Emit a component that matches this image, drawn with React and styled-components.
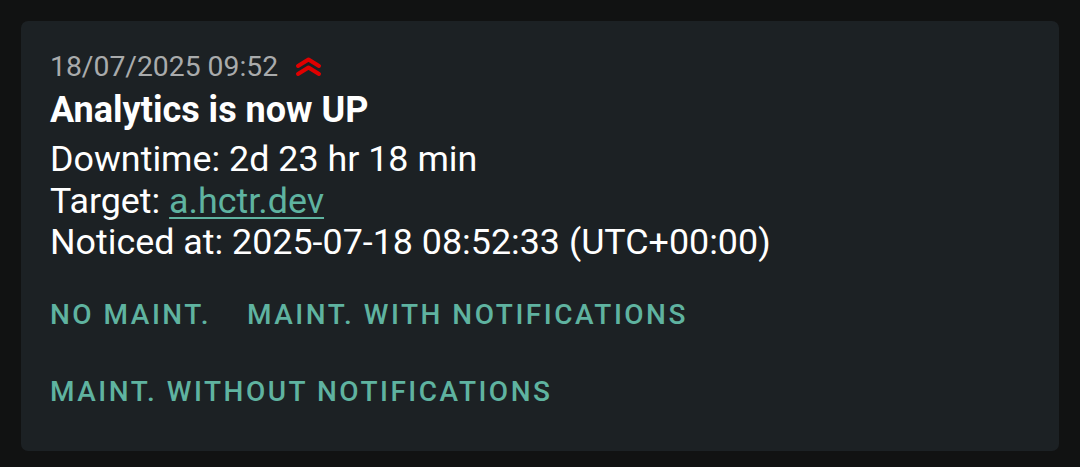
import React from 'react'
import styled, { createGlobalStyle } from 'styled-components'

const Global = createGlobalStyle`
  html, body {
    margin: 0;
    padding: 0;
    background: #111212;
    font-family: Roboto, "Noto Sans", sans-serif;
  }
`

const Page = styled.div`
  padding: 21px;
  height: 467px;
  box-sizing: border-box;
`

const Card = styled.div`
  background: #1c2124;
  border-radius: 7px;
  height: 430px;
  box-sizing: border-box;
  padding: 30px 29px 0 29px;
  color: #fff;
`

const Header = styled.div`
  display: flex;
  align-items: center;
  gap: 17px;
  height: 32px;
  line-height: 32px;
  font-size: 28.3px;
  color: #a9abac;
`

const Title = styled.div`
  margin-top: 7px;
  font-size: 36px;
  font-weight: 700;
  line-height: 40px;
`

const Body = styled.div`
  margin-top: 9px;
  font-size: 35.85px;
  line-height: 41.7px;
`

const Link = styled.a`
  color: #5fb3a0;
  text-decoration: underline;
  text-underline-offset: 4px;
  text-decoration-thickness: 2px;
`

const Actions = styled.div`
  display: flex;
  flex-wrap: wrap;
  column-gap: 36px;
  margin-top: 12px;
`

const Action = styled.button`
  background: none;
  border: none;
  padding: 0;
  height: 77px;
  display: flex;
  align-items: center;
  font-family: Roboto, sans-serif;
  font-size: 28px;
  font-weight: 500;
  letter-spacing: 2.5px;
  color: #5fb3a0;
  text-transform: uppercase;
`

const Chevrons = () => (
  <svg width="28" height="20" viewBox="0 0 28 20" fill="none" stroke="#e00000" strokeWidth="4" strokeLinecap="round" strokeLinejoin="round">
    <path d="M3 9 L13.5 2.5 L24 9" />
    <path d="M3 17 L13.5 10.5 L24 17" />
  </svg>
)

export default function App() {
  return (
    <Page>
      <Global />
      <Card>
        <Header>
          <span>18/07/2025 09:52</span>
          <Chevrons />
        </Header>
        <Title>Analytics is now UP</Title>
        <Body>
          <div>Downtime: 2d 23 hr 18 min</div>
          <div>Target: <Link href="#">a.hctr.dev</Link></div>
          <div>Noticed at: 2025-07-18 08:52:33 (UTC+00:00)</div>
        </Body>
        <Actions>
          <Action>No maint.</Action>
          <Action>Maint. with notifications</Action>
          <Action>Maint. without notifications</Action>
        </Actions>
      </Card>
    </Page>
  )
}
